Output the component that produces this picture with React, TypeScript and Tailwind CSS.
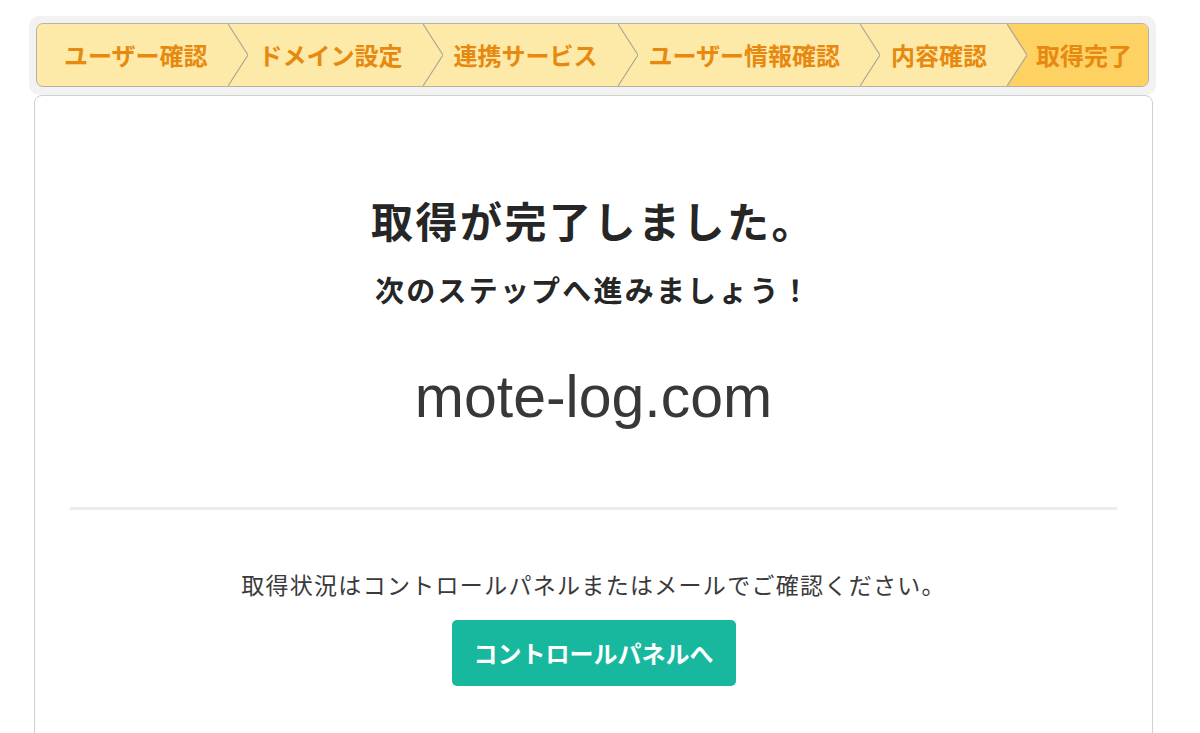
import React from "react";

const JP = "font-['Noto_Sans_CJK_JP','Noto_Sans',sans-serif]";

function Sep({ last }: { last?: boolean }) {
  return (
    <svg width="20" height="62" viewBox="0 0 20 62" className="shrink-0 block">
      {last && <polygon points="0,0 20,0 20,62 0,62 20,31" fill="#fdd263" />}
      <polyline points="0,0 20,31 0,62" fill="none" stroke="#aba595" strokeWidth="1.2" />
    </svg>
  );
}

const steps = ["ユーザー確認", "ドメイン設定", "連携サービス", "ユーザー情報確認", "内容確認"];

export default function App() {
  return (
    <div className={`w-[1200px] h-[733px] overflow-hidden bg-white pl-[29px] pt-[16px] ${JP}`}>
      <div className="w-[1127px] rounded-[10px] bg-[#f2f2f2] px-[7px] pt-[7px] pb-[8px]">
        <div className="flex h-[64px] items-stretch overflow-hidden rounded-[7px] border border-[#b9b2a0] bg-[#fdeaa8]">
          {steps.map((s, i) => (
            <React.Fragment key={s}>
              <div
                className={`flex items-center ${i === 0 ? "pl-[27px]" : "pl-[11px]"} pr-[20px] text-[24px] font-bold leading-none text-[#e8890f] whitespace-nowrap`}
              >
                {s}
              </div>
              <Sep last={i === steps.length - 1} />
            </React.Fragment>
          ))}
          <div className="flex flex-1 items-center bg-[#fdd263] pl-[9px] text-[24px] font-bold leading-none text-[#e8890f] whitespace-nowrap">
            取得完了
          </div>
        </div>
      </div>
      <div className="ml-[5px] w-[1119px] h-[700px] rounded-[8px] border border-[#d0d0d0] bg-white">
        <div className="flex flex-col items-center pt-[99px]">
          <h1 className="text-[42px] leading-[50px] font-bold tracking-[2.5px] text-[#262626]">取得が完了しました。</h1>
          <p className="mt-[25px] text-[29px] leading-[38px] font-bold tracking-[2.2px] text-[#262626]">次のステップへ進みましょう！</p>
          <p className="mt-[60px] font-['Liberation_Sans',Arial,sans-serif] text-[59px] leading-[59px] text-[#383838]">mote-log.com</p>
        </div>
        <div className="mx-[35px] mt-[80px] h-[3px] bg-[#ececec]" />
        <div className="flex flex-col items-center">
          <p className="mt-[58px] text-[23px] leading-[32px] tracking-[1.3px] text-[#3a3a3a]">取得状況はコントロールパネルまたはメールでご確認ください。</p>
          <button className="mt-[20px] h-[66px] w-[284px] rounded-[5px] bg-[#17b89e] text-[24px] font-bold text-white">
            コントロールパネルへ
          </button>
        </div>
      </div>
    </div>
  );
}
